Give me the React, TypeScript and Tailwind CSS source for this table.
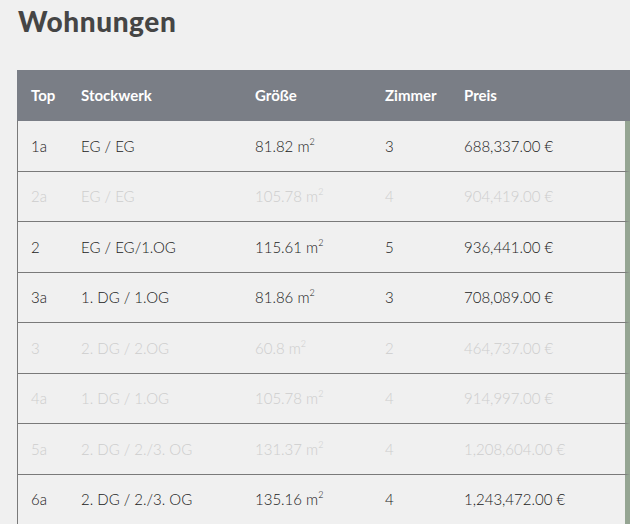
const rows = [
  { top: "1a", floor: "EG / EG", size: "81.82", rooms: "3", price: "688,337.00 €", active: true },
  { top: "2a", floor: "EG / EG", size: "105.78", rooms: "4", price: "904,419.00 €", active: false },
  { top: "2", floor: "EG / EG/1.OG", size: "115.61", rooms: "5", price: "936,441.00 €", active: true },
  { top: "3a", floor: "1. DG / 1.OG", size: "81.86", rooms: "3", price: "708,089.00 €", active: true },
  { top: "3", floor: "2. DG / 2.OG", size: "60.8", rooms: "2", price: "464,737.00 €", active: false },
  { top: "4a", floor: "1. DG / 1.OG", size: "105.78", rooms: "4", price: "914,997.00 €", active: false },
  { top: "5a", floor: "2. DG / 2./3. OG", size: "131.37", rooms: "4", price: "1,208,604.00 €", active: false },
  { top: "6a", floor: "2. DG / 2./3. OG", size: "135.16", rooms: "4", price: "1,243,472.00 €", active: true },
]

export default function App() {
  return (
    <div className="w-[630px] h-[524px] overflow-hidden bg-[#f0f0f0] font-['Lato',sans-serif]">
      <h1 className="pl-[18px] pt-[2px] text-[28px] leading-[38px] font-black text-[#454545] tracking-[0.6px]">
        Wohnungen
      </h1>

      <div className="mt-[30px] ml-[17px]">
        <div className="flex h-[51px] items-center bg-[#7a7e86] text-[15px] font-bold text-white">
          <div className="w-[51px] pl-[14px]">Top</div>
          <div className="w-[174px] pl-[13px]">Stockwerk</div>
          <div className="w-[130px] pl-[13px]">Größe</div>
          <div className="w-[79px] pl-[13px]">Zimmer</div>
          <div className="flex-1 pl-[13px]">Preis</div>
        </div>

        <div className="border-l border-[#7a7a7a]">
          {rows.map((r) => (
            <div
              key={r.top}
              className={`flex h-[50.5px] items-center border-b border-[#7a7a7a] border-r-[5px] border-r-[#95a593] text-[15px] font-light ${
                r.active ? "text-[#1a1a1a]" : "text-[#cdcdcd]"
              }`}
            >
              <div className="w-[50px] pl-[13px]">{r.top}</div>
              <div className="w-[174px] pl-[13px]">{r.floor}</div>
              <div className="w-[130px] pl-[13px]">
                {r.size} m<sup className="text-[9px] -top-[0.75em]">2</sup>
              </div>
              <div className="w-[79px] pl-[13px]">{r.rooms}</div>
              <div className="flex-1 pl-[13px]">{r.price}</div>
            </div>
          ))}
        </div>
      </div>
    </div>
  )
}
